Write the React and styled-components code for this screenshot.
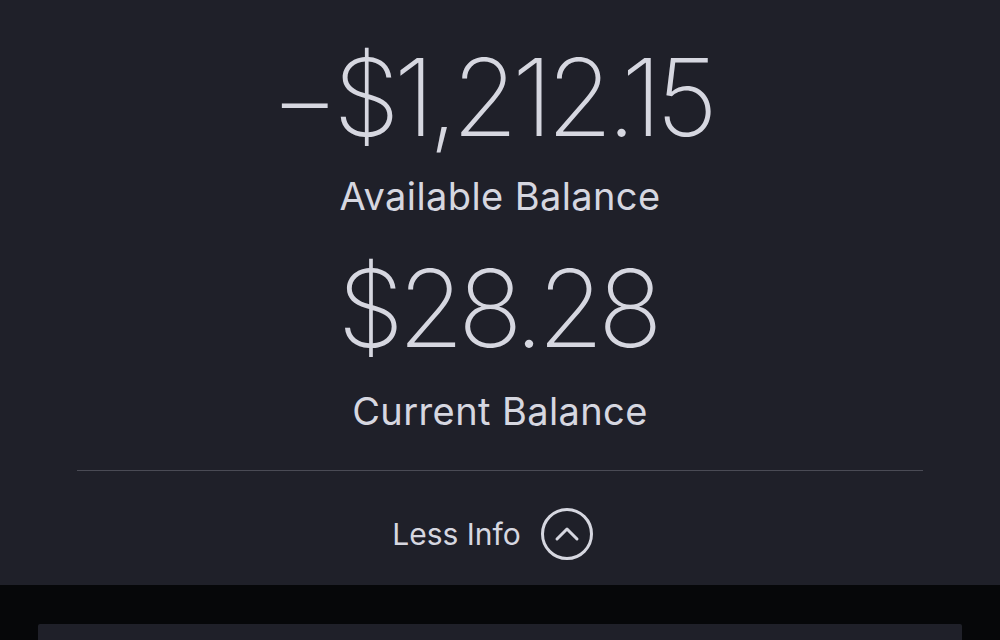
import React from 'react';
import styled, { createGlobalStyle } from 'styled-components';

const GlobalStyle = createGlobalStyle`
  html, body {
    margin: 0;
    padding: 0;
    background: #060709;
    overflow: hidden;
  }
`;

const Page = styled.div`
  width: 1000px;
  height: 640px;
  display: flex;
  flex-direction: column;
  font-family: Inter, "Noto Sans", sans-serif;
  color: #d6d7e0;
  background: #060709;
`;

const Summary = styled.section`
  height: 585px;
  box-sizing: border-box;
  background: #1f2029;
  display: flex;
  flex-direction: column;
  align-items: center;
  padding-top: 44px;
`;

const Amount = styled.div`
  font-size: 107px;
  font-weight: 250;
  line-height: 1;
  letter-spacing: -6px;
  margin-top: ${(p) => p.$gap || 0}px;
  margin-right: ${(p) => p.$nudge || 0}px;
`;

const Label = styled.div`
  font-size: 38px;
  font-weight: 400;
  line-height: 1;
  letter-spacing: 0.4px;
  margin-top: ${(p) => p.$gap || 0}px;
`;

const Divider = styled.hr`
  align-self: stretch;
  margin: 40px 77px 0;
  border: 0;
  border-top: 1px solid #4a4b55;
`;

const Toggle = styled.button`
  display: flex;
  align-items: center;
  gap: 20px;
  margin-top: 37px;
  padding: 0 15px 0 0;
  background: none;
  border: 0;
  color: inherit;
  font-family: inherit;
  font-size: 30px;
  font-weight: 400;
  cursor: pointer;
`;

const Circle = styled.span`
  width: 46px;
  height: 46px;
  border: 3px solid #d6d7e0;
  border-radius: 50%;
  display: flex;
  align-items: center;
  justify-content: center;
`;

const Tray = styled.div`
  flex: 1;
  padding: 39px 38px 0;
`;

const Card = styled.div`
  height: 100%;
  background: #1f2029;
  border-radius: 2px 2px 0 0;
`;

const Chevron = () => (
  <svg width="26" height="16" viewBox="0 0 26 16" fill="none">
    <path d="M3 13 L13 3 L23 13" stroke="#d6d7e0" strokeWidth="3" strokeLinecap="round" strokeLinejoin="round" />
  </svg>
);

export default function App() {
  return (
    <>
      <GlobalStyle />
      <Page>
        <Summary>
          <Amount $nudge={18}>−$1,212.15</Amount>
          <Label $gap={26}>Available Balance</Label>
          <Amount $gap={40} $nudge={6}>$28.28</Amount>
          <Label $gap={30}>Current Balance</Label>
          <Divider />
          <Toggle>
            Less Info
            <Circle>
              <Chevron />
            </Circle>
          </Toggle>
        </Summary>
        <Tray>
          <Card />
        </Tray>
      </Page>
    </>
  );
}
